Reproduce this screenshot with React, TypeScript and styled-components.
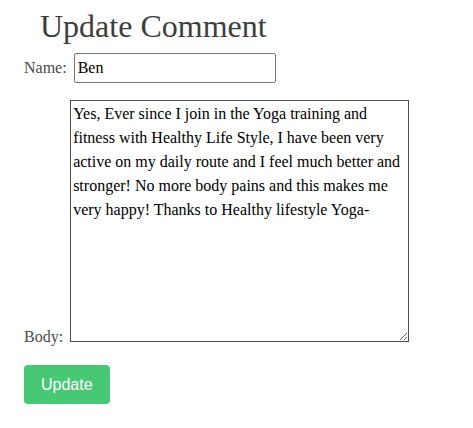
import React from "react";
import styled, { createGlobalStyle } from "styled-components";

const GlobalStyle = createGlobalStyle`
  html, body {
    margin: 0;
    padding: 0;
    background: #ffffff;
  }
  body {
    font-family: "Liberation Serif", "Times New Roman", serif;
    font-size: 16px;
    color: #4a4a4a;
  }
`;

const Page = styled.div`
  padding: 8px 24px;
`;

const Title = styled.h1`
  margin: 0 0 0 16px;
  font-family: "Liberation Serif", "Times New Roman", serif;
  font-size: 32px;
  font-weight: 400;
  line-height: 37px;
  color: #3d3d3d;
`;

const Form = styled.form`
  margin: 0;
`;

const Row = styled.div<{ $top: number }>`
  margin-top: ${(p) => p.$top}px;
  line-height: normal;
`;

const Label = styled.label`
  font-family: "Liberation Serif", "Times New Roman", serif;
  font-size: 16px;
  color: #4a4a4a;
  margin-right: 7px;
`;

const TextInput = styled.input`
  box-sizing: border-box;
  width: 202px;
  height: 30px;
  padding: 1px 3px;
  border: 1px solid #767676;
  border-radius: 2px;
  font-family: "Liberation Serif", "Times New Roman", serif;
  font-size: 16px;
  color: #000;
  background: #fff;
  vertical-align: baseline;
  outline: none;
`;

const TextArea = styled.textarea`
  box-sizing: border-box;
  width: 339px;
  height: 242px;
  padding: 1px 2px;
  border: 1px solid #4d4d4d;
  border-radius: 0;
  font-family: "Liberation Serif", "Times New Roman", serif;
  font-size: 16px;
  line-height: 24px;
  color: #000;
  background: #fff;
  vertical-align: baseline;
  outline: none;
  overflow: hidden;
`;

const Button = styled.button`
  display: block;
  box-sizing: border-box;
  height: 39px;
  margin-top: 19px;
  padding: 0 17px;
  border: none;
  border-radius: 4px;
  background: #48c774;
  color: #ffffff;
  font-family: "Liberation Sans", Arial, sans-serif;
  font-size: 16px;
  cursor: pointer;
`;

const bodyText =
  "Yes, Ever since I join in the Yoga training and fitness with Healthy Life Style, I have been very active on my daily route and I feel much better and stronger! No more body pains and this makes me very happy! Thanks to Healthy lifestyle Yoga-";

export default function App() {
  return (
    <>
      <GlobalStyle />
      <Page>
        <Title>Update Comment</Title>
        <Form onSubmit={(e) => e.preventDefault()}>
          <Row $top={8}>
            <Label htmlFor="name">Name:</Label>
            <TextInput id="name" type="text" defaultValue="Ben" />
          </Row>
          <Row $top={17}>
            <Label htmlFor="body">Body:</Label>
            <TextArea id="body" defaultValue={bodyText} />
          </Row>
          <Button type="submit">Update</Button>
        </Form>
      </Page>
    </>
  );
}
